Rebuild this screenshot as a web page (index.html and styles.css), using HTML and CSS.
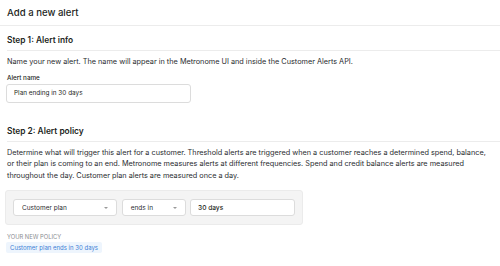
FILE: index.html
```html
<!DOCTYPE html>
<html lang="en">
<head>
    <meta charset="UTF-8">
    <meta name="viewport" content="width=device-width, initial-scale=1.0">
    <title>Add a new alert</title>
    <link rel="stylesheet" href="styles.css">
</head>
<body>
    <div class="page-header">
        <h1>Add a new alert</h1>
    </div>

    <div class="section">
        <h2>Step 1: Alert info</h2>
        <p class="desc">Name your new alert. The name will appear in the Metronome UI and inside the Customer Alerts API.</p>
        <label class="field-label" for="alertName">Alert name</label>
        <input type="text" id="alertName" class="text-input" value="Plan ending in 30 days">
    </div>

    <div class="section section-policy">
        <h2>Step 2: Alert policy</h2>
        <p class="desc">Determine what will trigger this alert for a customer. Threshold alerts are triggered when a customer reaches a determined spend, balance, or their plan is coming to an end. Metronome measures alerts at different frequencies. Spend and credit balance alerts are measured throughout the day. Customer plan alerts are measured once a day.</p>

        <div class="policy-box">
            <div class="select select-wide">
                <span>Customer plan</span>
                <span class="caret"></span>
            </div>
            <div class="select select-narrow">
                <span>ends in</span>
                <span class="caret"></span>
            </div>
            <input type="text" class="text-input days-input" value="30 days">
        </div>

        <div class="policy-label">YOUR NEW POLICY</div>
        <div class="policy-badge">Customer plan ends in 30 days</div>
    </div>
</body>
</html>
```

FILE: styles.css
```css
body {
    margin: 0;
    font-family: Inter, "Noto Sans", Arial, sans-serif;
    color: #1d1f22;
    background-color: #fff;
}

.page-header {
    padding: 6px 7px 5px;
    border-bottom: 1px solid #ececec;
}
.page-header h1 {
    margin: 0;
    font-size: 9.6px;
    font-weight: 500;
    line-height: 14px;
}

.section {
    padding: 0 0 0 7px;
}
.section-policy {
    margin-top: 14px;
}
.section h2 {
    margin: 0;
    padding: 9px 0 5px;
    font-size: 8.4px;
    font-weight: 600;
    line-height: 10px;
    border-bottom: 1px solid #ececec;
}

.desc {
    margin: 5px 0 0;
    font-size: 7.3px;
    line-height: 11.5px;
    color: #2a2c30;
    padding-right: 8px;
}

.field-label {
    display: block;
    margin-top: 6px;
    font-size: 6.3px;
    font-weight: 500;
    line-height: 8px;
}

.text-input {
    box-sizing: border-box;
    display: block;
    margin-top: 2px;
    margin-left: -1px;
    width: 185px;
    height: 19px;
    padding: 0 7px;
    font-family: inherit;
    font-size: 6.4px;
    color: #1d1f22;
    background-color: #fff;
    border: 1px solid #dcdcdc;
    border-radius: 3px;
    outline: none;
}

.policy-box {
    display: flex;
    gap: 5px;
    width: 298px;
    box-sizing: border-box;
    margin: 9px 0 0 -2px;
    padding: 8px 7px;
    background-color: #f4f4f4;
    border: 1px solid #ebebeb;
    border-radius: 3px;
}

.select {
    box-sizing: border-box;
    display: flex;
    align-items: center;
    justify-content: space-between;
    height: 17px;
    padding: 0 8px;
    font-size: 6.5px;
    color: #2a2c30;
    background-color: #fff;
    border: 1px solid #dcdcdc;
    border-radius: 3px;
}
.select-wide {
    width: 105px;
}
.select-narrow {
    width: 65px;
}
.caret {
    width: 0;
    height: 0;
    border-left: 2px solid transparent;
    border-right: 2px solid transparent;
    border-top: 2px solid #9a9a9a;
}

.days-input {
    margin: 0 0 0 -1px;
    width: 105px;
    height: 17px;
    font-size: 6.6px;
    font-weight: 500;
}

.policy-label {
    margin-top: 8px;
    font-size: 5.8px;
    line-height: 8px;
    color: #8a8d91;
}

.policy-badge {
    width: fit-content;
    margin: 1px 0 0 -1px;
    padding: 1.5px 4px;
    font-size: 6px;
    line-height: 8px;
    color: #3d7fd6;
    background-color: #eef5fd;
    border-radius: 2px;
}
```
